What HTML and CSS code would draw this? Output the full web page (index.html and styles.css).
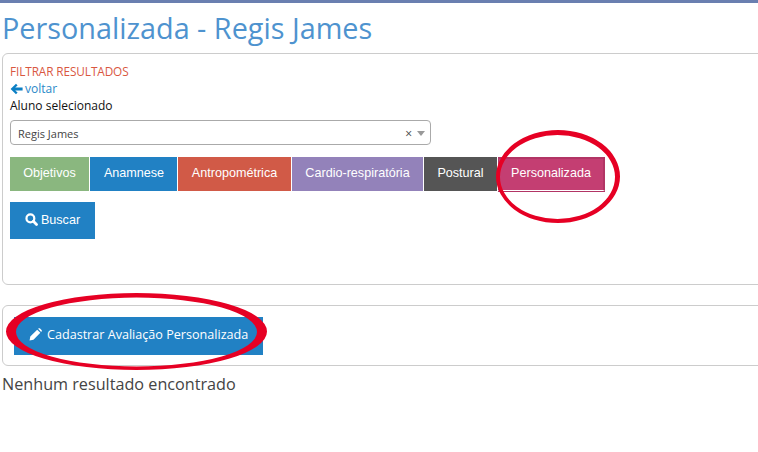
FILE: index.html
```html
<!DOCTYPE html>
<html lang="en">
<head>
    <meta charset="UTF-8">
    <title>Personalizada - Regis James</title>
    <link rel="stylesheet" href="styles.css">
</head>
<body>
    <div class="page">
        <h1 class="title">Personalizada - Regis James</h1>

        <!-- Filtros -->
        <div class="panel filter-panel">
            <div class="filter-title">FILTRAR RESULTADOS</div>
            <a class="back-link">
                <svg class="back-icon" viewBox="0 0 13 12" width="13" height="12"><path d="M6 .8 L.6 6 L6 11.2 L7.6 9.6 L5.2 7.5 L12.6 7.5 L12.6 4.5 L5.2 4.5 L7.6 2.4 Z" fill="#0b7fc4"/></svg>
                voltar
            </a>
            <div class="field-label">Aluno selecionado</div>
            <div class="select-box">
                <span class="select-value">Regis James</span>
                <span class="select-clear">×</span>
                <span class="select-arrow"></span>
            </div>
            <div class="tabs">
                <button class="tab tab-green">Objetivos</button>
                <button class="tab tab-blue">Anamnese</button>
                <button class="tab tab-red">Antropométrica</button>
                <button class="tab tab-purple">Cardio-respiratória</button>
                <button class="tab tab-dark">Postural</button>
                <button class="tab tab-pink">Personalizada</button>
            </div>
            <button class="search-btn">
                <svg viewBox="0 0 14 14" width="13" height="13"><circle cx="5.8" cy="5.8" r="4.2" fill="none" stroke="#fff" stroke-width="2.4"/><path d="M9 9 L12.4 12.4" stroke="#fff" stroke-width="3" stroke-linecap="round"/></svg>
                Buscar
            </button>
        </div>

        <!-- Cadastro -->
        <div class="panel action-panel">
            <button class="add-btn">
                <svg viewBox="0 0 14 14" width="13" height="13"><path d="M.6 13.4 L1.4 9.2 L8.8 1.8 L12.2 5.2 L4.8 12.6 Z M9.8 .9 L10.6 .3 Q11.3 -.1 11.9 .5 L13.5 2.1 Q14.1 2.7 13.7 3.4 L13.1 4.2 Z" fill="#fff"/></svg>
                Cadastrar Avaliação Personalizada
            </button>
        </div>
        <p class="empty-msg">Nenhum resultado encontrado</p>

        <!-- marcacoes em vermelho, traco irregular como no desenho a mao -->
        <svg class="marks" width="758" height="452">
            <path fill="#e60024" fill-rule="evenodd" d="M496 176.500a62 46.500 0 1 0 124 0a62 46.500 0 1 0 -124 0Z M500 177a57.500 42 0 1 0 115 0a57.500 42 0 1 0 -115 0Z"/>
            <path fill="#e60024" fill-rule="evenodd" d="M6 331.500a130.500 38.500 0 1 0 261 0a130.500 38.500 0 1 0 -261 0Z M16 332a120.500 34.500 0 1 0 241 0a120.500 34.500 0 1 0 -241 0Z"/>
        </svg>
    </div>
</body>
</html>
```
FILE: styles.css
```css
html, body {
    margin: 0;
    height: 100%;
    overflow: hidden;
}
body {
    font-family: "Open Sans", sans-serif;
    background: #fff;
    color: #333;
}
.page {
    position: relative;
    height: 452px;
    border-top: 3px solid #6a7fb0;
    box-sizing: border-box;
    padding-left: 2px;
    overflow: hidden;
}
.title {
    margin: 0;
    padding-top: 6px;
    font-size: 28.8px;
    line-height: 37px;
    font-weight: 400;
    color: #4e93cf;
}
.panel {
    width: 800px;
    box-sizing: border-box;
    border: 1px solid #ccc;
    border-radius: 6px;
}
.filter-panel {
    height: 232px;
    margin-top: 7px;
    padding: 9px 7px;
}
.filter-title {
    font-size: 11.8px;
    line-height: 16px;
    font-weight: 500;
    letter-spacing: -.1px;
    color: #d9573f;
}
.back-link {
    display: flex;
    align-items: center;
    gap: 2px;
    margin-top: 2px;
    font-size: 12px;
    line-height: 16px;
    color: #2a88c8;
}
.field-label {
    font-size: 12px;
    line-height: 17px;
    color: #111;
}
.select-box {
    display: flex;
    align-items: center;
    width: 421px;
    height: 25px;
    box-sizing: border-box;
    margin-top: 6px;
    padding: 1px 5px 0 7px;
    border: 1px solid #aaa;
    border-radius: 4px;
    font-size: 11px;
    color: #444;
}
.select-value {
    flex: 1;
}
.select-clear {
    font-size: 12px;
    margin-right: 5px;
}
.select-arrow {
    width: 0;
    height: 0;
    border-left: 4px solid transparent;
    border-right: 4px solid transparent;
    border-top: 5px solid #999;
}
.tabs {
    display: flex;
    margin-top: 12px;
}
.tab {
    height: 34px;
    padding: 0 0 2px;
    border: none;
    border-right: 1px solid #fff;
    font-family: "Liberation Sans", sans-serif;
    font-size: 12.6px;
    color: #fff;
}
.tab-green { background: #8ab77f; width: 80px; }
.tab-blue { background: #2181c4; width: 88px; padding-left: 1px; }
.tab-red { background: #d15a47; width: 114px; }
.tab-purple { background: #9382ba; width: 132px; }
.tab-dark { background: #555; width: 74px; }
.tab-pink {
    width: 107px;
    padding-bottom: 3px;
    background: #c43e72;
    border: 2px solid #b23565;
    border-left-width: 1px;
    border-bottom: 1px solid #fff;
    box-shadow: 0 1px 0 #b23565;
}
.search-btn {
    display: flex;
    align-items: center;
    justify-content: center;
    gap: 3px;
    width: 85px;
    height: 37px;
    margin-top: 11px;
    padding: 0 0 2px;
    border: none;
    background: #2181c4;
    color: #fff;
    font-family: "Liberation Sans", sans-serif;
    font-size: 12.6px;
}
.action-panel {
    height: 61px;
    margin-top: 20px;
    padding-top: 11px;
    padding-left: 11px;
}
.add-btn {
    display: flex;
    align-items: center;
    gap: 5px;
    width: 249px;
    height: 38px;
    padding: 0 0 3px 15px;
    border: none;
    background: #2181c4;
    color: #fff;
    font-family: "Open Sans", sans-serif;
    font-size: 12.6px;
    white-space: nowrap;
}
.empty-msg {
    margin: 8px 0 0;
    font-size: 16.2px;
    line-height: 21px;
    color: #444;
}
.marks {
    position: absolute;
    left: 0;
    top: -3px;
    pointer-events: none;
}
```
